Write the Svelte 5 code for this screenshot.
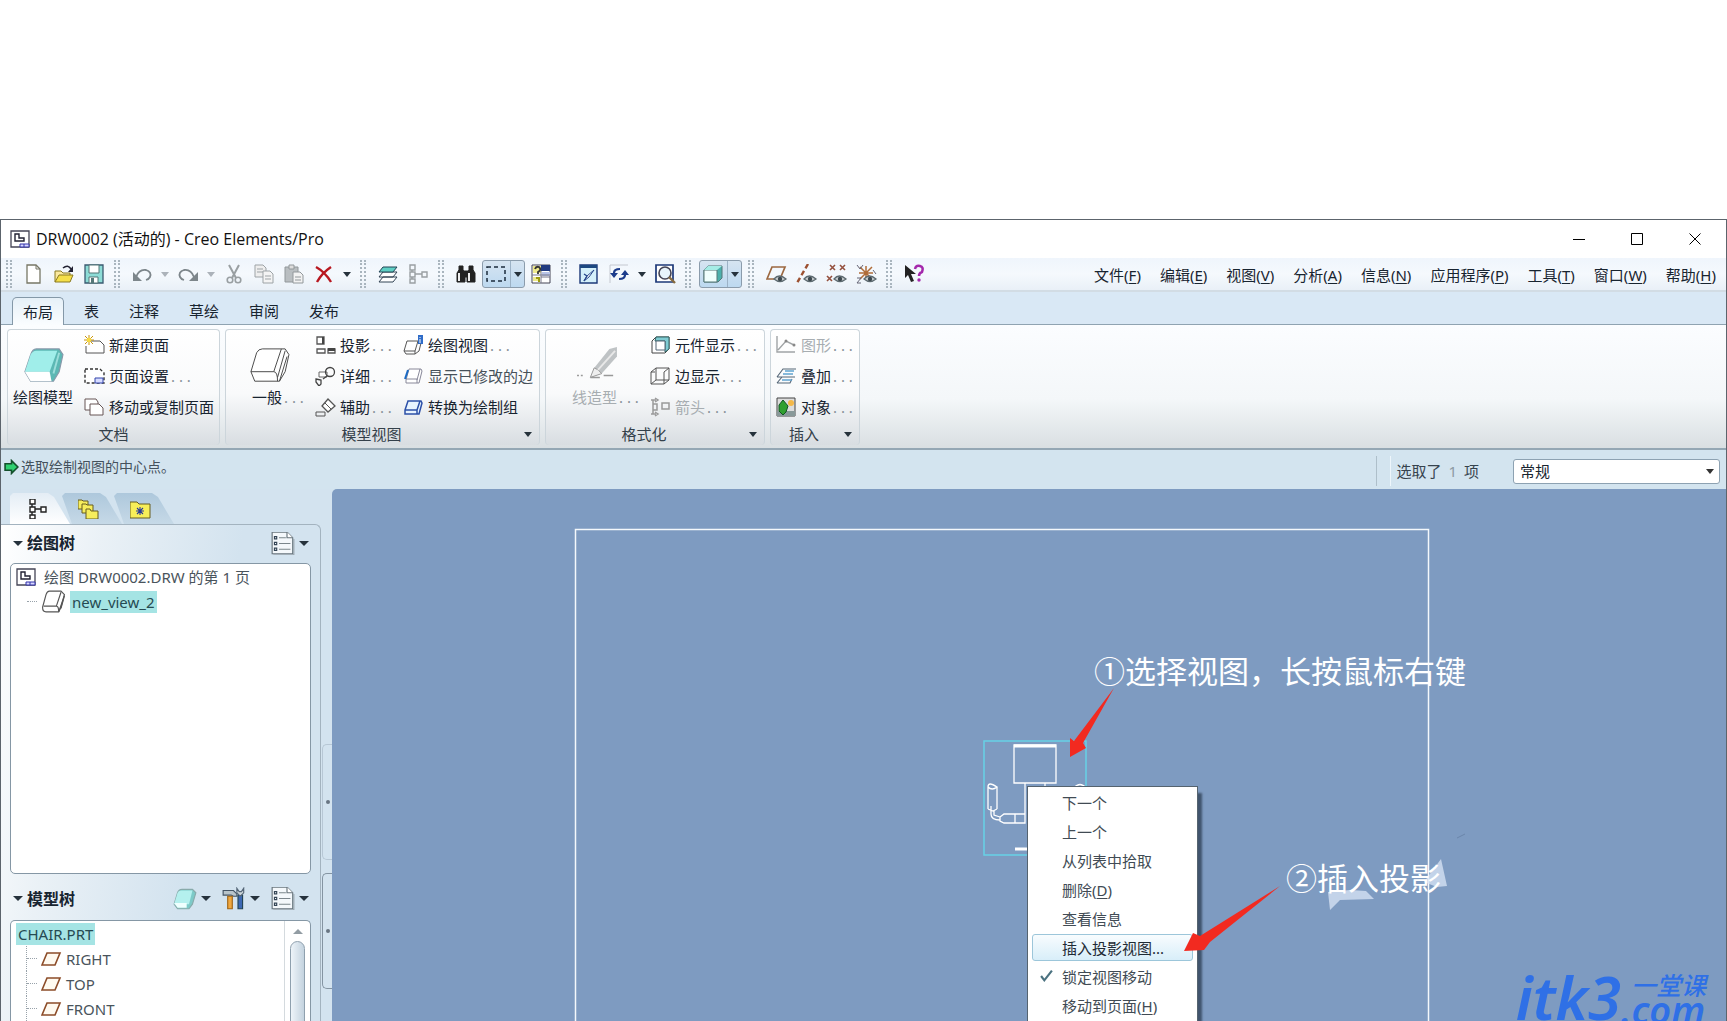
<script>
  let filter = "常规";

  // shapes that several icons share
  const sheetBox = `<path d="M1 15 4 4q1-3 3-3h10l3 3-3 11-2 4H4q-3 0-3-4Z" fill="#fff" stroke="#555"/><path d="M2 14h11q2 0 2 5M13 14 17 2M15 19 20 5M17 16l3-11" fill="none" stroke="#555"/>`;
  const eye = `<path d="M8 15q5-6 12 0-6 5-12 0Z" fill="#c9ced0" stroke="#5d6a70" stroke-width="1.3"/><circle cx="14" cy="15" r="2.2" fill="#3c484e"/>`;
  const cross = (x, y) => `<path d="m${x} ${y} 5 5m0-5-5 5" stroke="#94503e" stroke-width="1.6"/>`;

  const icons = {
    app: `<path d="M1 2h18v16H1Z" fill="#fff" stroke="#445" stroke-width="1.3"/><path d="M5 5v7h9v-3H9V5Z" fill="#fff" stroke="#223" stroke-width="1.4"/><path d="M10 15h9v3h-9Z" fill="#d8d8ff" stroke="#33a"/><path d="M14 15v3" stroke="#33a"/>`,
    newFile: `<path d="M3 1h9l4 4v14H3Z" fill="#fff" stroke="#776" stroke-width="1.3"/><path d="M12 1v4h4" fill="none" stroke="#776"/>`,
    open: `<path d="M1 18V7h6l2 2h7v3" fill="#fbe9a0" stroke="#8a7a20"/><path d="M1 18 5 11h14l-3 7Z" fill="#f5df4a" stroke="#8a7a20"/><path d="M9 4q5-4 8 1" fill="none" stroke="#223" stroke-width="1.6"/><path d="M19 2v6h-5Z" fill="#223"/>`,
    save: `<path d="M1 1h18v18H1Z" fill="#8ddcd6" stroke="#3a5a70" stroke-width="1.3"/><path d="M5 1h10v8H5ZM5 13h9v6H5Z" fill="#fff" stroke="#577"/><path d="M7 14h3v5H7Z" fill="#577"/>`,
    undo: `<path d="M4 13q3-8 10-7 6 2 4 7-1 2-4 3" fill="none" stroke="#7d868b" stroke-width="1.8"/><path d="M1 8v9h9Z" fill="#7d868b"/>`,
    redo: `<path d="M16 13Q13 5 6 6 0 8 2 13q1 2 4 3" fill="none" stroke="#7d868b" stroke-width="1.8"/><path d="M20 8v9h-9Z" fill="#7d868b"/>`,
    cut: `<path d="m5 1 7 13M15 1 8 14" stroke="#999fa2" stroke-width="2"/><circle cx="6" cy="16" r="2.8" fill="none" stroke="#999fa2" stroke-width="1.6"/><circle cx="14" cy="16" r="2.8" fill="none" stroke="#999fa2" stroke-width="1.6"/>`,
    copy: `<path d="M1 1h8l3 3v9H1Z" fill="#eee" stroke="#9da3a6"/><path d="M9 7h7l3 3v9H9Z" fill="#f4f4f4" stroke="#9da3a6"/><path d="M3 5h6M3 8h6M11 12h6M11 15h6" stroke="#9da3a6"/>`,
    paste: `<path d="M1 3h13v15H1Z" fill="#b9bec1" stroke="#92989b"/><path d="M5 1h5v4H5Z" fill="#ddd" stroke="#92989b"/><path d="M9 8h7l3 3v8H9Z" fill="#f2f2f2" stroke="#92989b"/><path d="M11 13h6M11 16h6" stroke="#92989b"/>`,
    remove: `<path d="M2 3q9 5 15 15M17 3Q8 9 3 18" fill="none" stroke="#b81820" stroke-width="2.4"/>`,
    layers: `<path d="m1 18 4-5h14l-4 5ZM1 13l4-5h14l-4 5Z" fill="#fff" stroke="#345"/><path d="m1 8 4-5h14l-4 5Z" fill="#5fcfc4" stroke="#245"/>`,
    tree: `<path d="M2 1h5v5H2ZM2 8h5v5H2ZM2 15h5v4H2ZM14 8h5v5h-5ZM7 10h7M4 6v2M4 13v2" fill="none" stroke="#999fa2" stroke-width="1.4"/>`,
    treeDark: `<g fill="#fff" stroke="#222" stroke-width="1.4"><path d="M4 0h5v5H4ZM4 8h5v5H4ZM4 16h5v4H4ZM15 8h5v5h-5Z"/><path d="M9 10h6M6 5v3M6 13v3"/></g>`,
    find: `<path d="M3 7V2h4v5M13 7V2h4v5M1 9l2-3h4l2 3v9H1ZM11 9l2-3h4l2 3v9h-8ZM8 7h4v6H8Z" fill="#222" stroke="#222"/><path d="M3 9v8M13 9v8" stroke="#eee" stroke-width="2"/>`,
    select: `<path d="M1 3h18v14H1Z" fill="none" stroke="#1c2c3c" stroke-width="1.5" stroke-dasharray="4 3"/>`,
    query: `<path d="M1 1h18v18H1Z" fill="#fff" stroke="#445"/><path d="M10 1h9v6h-9Z" fill="#203a80"/><path d="M11 8h8v4h-8Z" fill="#b8c4e8"/><path d="M2 2h8v7H2ZM2 13h7v4H2Z" fill="#eeea8c"/><path d="M4 5q1-3 4-2 3 3-1 5v2" fill="none" stroke="#333" stroke-width="1.8"/><path d="M5 14h3v4" fill="none" stroke="#9b9a10" stroke-width="2"/><path d="M10 13h9M10 7v12M1 11h18" stroke="#778"/>`,
    repaint: `<path d="M1 1h17v18H1Z" fill="#d4f0fa" stroke="#1c3878" stroke-width="1.4"/><path d="M1 1h17v3H1Z" fill="#1c4880"/><path d="m5 17 3-5 7-6-5 7Z" fill="#fff" stroke="#27488c"/><path d="m5 10 3 2M5 17l3-5" stroke="#27488c" stroke-width="1.4"/>`,
    refresh: `<path d="M1 19V1h18" fill="none" stroke="#c4c8d0"/><path d="M5 9q0-4 6-4M16 11q0 4-6 4" fill="none" stroke="#1c3c8c" stroke-width="2.200"/><path d="M1 9h8l-4 5ZM12 11h8l-4-5Z" fill="#1c3c8c"/>`,
    zoom: `<path d="M1 1h17v17H1Z" fill="#fff" stroke="#1c3878" stroke-width="1.7"/><circle cx="10" cy="9" r="6" fill="#e8f4fc" stroke="#445" stroke-width="1.6"/><path d="m14 13 6 6" stroke="#876b40" stroke-width="2.4"/>`,
    shade: `<path d="m1 6 4-4h14v12l-4 4H1Z" fill="#4cb0ac" stroke="#577"/><path d="M1 6h13v12H1Z" fill="#f0fffd" stroke="#577"/><path d="m1 6 4-4h14l-5 4Z" fill="#a5ece6"/>`,
    planes: `<path d="M1 15 6 3h13l-5 12Z" fill="none" stroke="#9c6840" stroke-width="1.7"/>${eye}`,
    axes: `<path d="M12 0 1 19" stroke="#9c5030" stroke-width="2.4" stroke-dasharray="5 3"/>${eye}`,
    points: `${cross(4, 1)}${cross(14, 1)}${cross(1, 12)}${eye}`,
    csys: `<path d="M10 2v14M3 9h14M4 3l12 12M16 3 4 15" stroke="#b06c38" stroke-width="1.5"/><path d="m1 1 3 4 3-4M17 6l3 4M1 14h4l-4 5h4" fill="none" stroke="#667"/>${eye}`,
    help: `<path d="M1 1v13l3-3 3 7 3-1-3-7h5Z" fill="#222"/><path d="M11 5q1-4 5-3t2 6q-3 1-3 4" fill="none" stroke="#a428ac" stroke-width="2.5"/><circle cx="15" cy="16" r="1.7" fill="#a428ac"/>`,
    newSheet: `<path d="M6 6h10l4 4v8H2v-7" fill="#fff" stroke="#555"/><path d="M5 0v10M0 5h10M1 1l8 8M9 1 1 9" stroke="#c8940c"/><circle cx="5" cy="5" r="2.3" fill="#f8dc40"/>`,
    sheetSetup: `<path d="M1 3h15l4 4v10H1Z" fill="#fff" stroke="#333" stroke-width="1.4" stroke-dasharray="3 2"/><path d="M11 12h8v5h-8Z" fill="#d7dcff" stroke="#34a"/>`,
    sheets: `<path d="M1 2h11l2 3v8H1Z" fill="#fff" stroke="#655"/><path d="M6 7h9l4 4v7H6Z" fill="#fff" stroke="#655"/>`,
    projection: `<path d="M2 2h7v7H2ZM2 14h8v4H2ZM13 14h7v4h-7Z" fill="#fff" stroke="#555" stroke-width="1.3"/><path d="M13 13h7v3h-7ZM7 2h2v7H7Z" fill="#444"/>`,
    detail: `<path d="M4 6h8v5H4Z" fill="#fff" stroke="#666"/><circle cx="15" cy="6" r="4.5" fill="none" stroke="#444" stroke-width="1.3"/><path d="m1 13 5 1v4l-2 2-3-4ZM8 13l4-3" fill="none" stroke="#444" stroke-width="1.3"/>`,
    auxiliary: `<path d="M13 2 20 9l-7 6-6-6Z" fill="#fff" stroke="#555" stroke-width="1.3"/><path d="M1 15h9v4H1ZM10 6l6 6" fill="none" stroke="#555"/>`,
    viewInfo: `<g fill="none" stroke="#555"><path d="m1 16 3-10h11l-3 10ZM12 16v3l4-3 2-8M1 16l2 3h9"/></g><path d="M15 0h5v9h-5Z" fill="#2f6cc8"/><path d="M17 2v1m0 1v4" stroke="#fff"/>`,
    edges: `<path d="m3 14 3-11h12l1 2-3 12H3ZM14 14l3-11M3 13h11v4" fill="#fff" stroke="#889"/><path d="m2 13 3-9" stroke="#1a6ac4" stroke-width="2"/>`,
    convert: `<path d="m2 13 3-9h13l1 2-3 11H2ZM14 13l3-9M2 13h12v4" fill="#e8f4ff" stroke="#2c50a8" stroke-width="1.5"/>`,
    component: `<path d="m2 6 4-4h13v12l-4 4H2Z" fill="#fff" stroke="#444"/><path d="M6 2h13v12l-4 3V6H5Z" fill="#7fcbd2" stroke="#366"/><path d="M6 6h9v9H6Z" fill="#fff" stroke="#567"/>`,
    edgeShow: `<path d="m1 6 5-4h13v12l-5 4H1ZM6 2v12h13M6 14l-5 4M19 2l-5 4v12M1 6h4" fill="none" stroke="#555"/>`,
    arrow: `<path d="M1 3h5M5 1l3 2-3 2M1 17h5M5 15l3 2-3 2M3 3v14M3 7h4v6H3M12 6h7v6h-7Z" fill="none" stroke="#999" stroke-width="1.5"/>`,
    graph: `<path d="M1 1v16h18M2 15l8-9 8 4" fill="none" stroke="#a0a4a6" stroke-width="1.4"/><circle cx="10" cy="6" r="1.5" fill="#888"/><circle cx="18" cy="10" r="1.5" fill="#888"/>`,
    overlay: `<path d="m1 17 5-6h13M1 17h13l2-4M1 11l6-8h13M1 11h13" fill="none" stroke="#567" stroke-width="1.1"/><path d="M9 5h9M7 8h10M6 14h10" stroke="#60a4d0" stroke-width="1.5"/>`,
    object: `<path d="M1 1h18v18H1Z" fill="#ddd" stroke="#444"/><path d="M1 14h18v5H1Z" fill="#899"/><path d="m7 3 5 6-2 6-3 3-4-4V8Z" fill="#30a030" stroke="#152"/><circle cx="15" cy="6" r="3" fill="#f4b848"/>`,
    layerTab: `<g fill="#f6ed5c" stroke="#665c20"><path d="M0 1h4l1 1h5v8H0Z"/><path d="M4 5h4l1 1h6v8H4Z"/><path d="M8 10h4l1 2h7v8H8Z"/></g>`,
    starTab: `<path d="M0 3h7l2 2h11v14H0Z" fill="#f7ee58" stroke="#665c20"/><path d="M10 8v8M6 12h8M7 9l6 6M13 9l-6 6" stroke="#2a3a98" stroke-width="1.1"/>`,
    list: `<path d="M1 0h13l5 5v14H1Z" fill="#f4f8fb" stroke="#67747c"/><path d="M14 0v5h5" fill="#fff" stroke="#67747c"/><path d="M2 20h18V6" fill="none" stroke="#9aa6ae"/><path d="M7 5h6M7 10h10M7 15h10" stroke="#7b868c"/><path d="M3 4h2v2H3ZM3 9h2v2H3ZM3 14h2v2H3Z" fill="none" stroke="#345"/>`,
    model: `<path d="M1 15 4 5q1-3 4-3h9l3 3-3 10-3 4H4Z" fill="#7ccac8" stroke="#8aa"/><path d="M1 15 4 5q1-2 3-2h10l-3 12Z" fill="#b4f0ee"/><path d="M1 14h11v4H4Z" fill="#effffe"/>`,
    tools: `<path d="M1 3h9l3 3v2h-3L8 7H1Z" fill="#b8c4ca" stroke="#456"/><path d="M5 8h4v11H5Z" fill="#f0a840" stroke="#a06414"/><path d="M14 7h4v12h-4Z" fill="#3c68b4" stroke="#245"/><path d="m13 1 2 3h2l2-3v4l-3 3-3-3Z" fill="#ccd6da" stroke="#567"/>`,
    view: sheetBox,
    plane: `<path d="M1 16 6 4h13l-5 12Z" fill="#fffaf0" stroke="#8c4c28" stroke-width="1.6"/>`,
    modelBig: `<path d="M1 13 4 4q1-3 3-3h12l2 3-2 9-3 5H4Z" fill="#5cb8b4" stroke="#89a" stroke-width=".6"/><path d="M1 13 4 4q1-2 3-2h11l-4 11Z" fill="#a0eeea"/><path d="M1 13h13l1 5H4Z" fill="#fff"/><path d="m16 14 3-11" stroke="#9cdedb"/>`,
    viewBig: `<g fill="#fff" stroke="#444" stroke-width=".5"><path d="M1 13 4 3q1-2 3-2h12l2 3-2 9-3 5H3Z"/><path d="M1 13h12q2 0 2 5M13 13 17 1M15 16l4-14M16 18l4-13" fill="none"/></g>`,
    pencil: `<path d="m9 11 8-10 4-1v5l-8 9-6 2Z" fill="#bfc3c5"/><path d="m9 11 2 1 2 2-6 2Z" fill="#eee" stroke="#999" stroke-width=".5"/><path d="m11 12 9-10" stroke="#e8e8e8"/><path d="M0 15h1m1 0h1m4 1h5m2-1h5" stroke="#999" stroke-width=".8"/>`,
  };

  const toolbar = [
    ["grip"], ["newFile", "新建"], ["open", "打开"], ["save", "保存"],
    ["grip"], ["undo", "撤消"], ["drop", "撤消列表", true], ["redo", "重做"], ["drop", "重做列表", true],
    ["cut", "剪切"], ["copy", "复制"], ["paste", "粘贴"], ["remove", "删除"], ["drop", "删除选项"],
    ["grip"], ["layers", "层"], ["tree", "模型树"],
    ["grip"], ["find", "查找"], ["toggle", "选取", "select"], ["query", "查询"],
    ["grip"], ["repaint", "重画"], ["refresh", "更新"], ["drop", "更新选项"], ["zoom", "缩放"],
    ["grip"], ["toggle", "着色", "shade"],
    ["grip"], ["planes", "基准平面"], ["axes", "基准轴"], ["points", "基准点"], ["csys", "坐标系"],
    ["grip"], ["help", "帮助"],
  ];

  const menus = [
    ["文件", "F"], ["编辑", "E"], ["视图", "V"], ["分析", "A"], ["信息", "N"],
    ["应用程序", "P"], ["工具", "T"], ["窗口", "W"], ["帮助", "H"],
  ];

  const tabs = ["布局", "表", "注释", "草绘", "审阅", "发布"];

  // items: [icon, text, has dots, state]
  const groups = [
    {
      name: "文档", cls: "doc",
      big: ["modelBig", "绘图模型", false],
      cols: [[["newSheet", "新建页面"], ["sheetSetup", "页面设置", true], ["sheets", "移动或复制页面"]]],
    },
    {
      name: "模型视图", cls: "views", more: true,
      big: ["viewBig", "一般", true],
      cols: [
        [["projection", "投影", true], ["detail", "详细", true], ["auxiliary", "辅助", true]],
        [["viewInfo", "绘图视图", true], ["edges", "显示已修改的边", false, "soft"], ["convert", "转换为绘制组"]],
      ],
    },
    {
      name: "格式化", cls: "format", more: true,
      big: ["pencil", "线造型", true, "off"],
      cols: [[["component", "元件显示", true], ["edgeShow", "边显示", true], ["arrow", "箭头", true, "off"]]],
    },
    {
      name: "插入", cls: "insert", more: true,
      cols: [[["graph", "图形", true, "off"], ["overlay", "叠加", true], ["object", "对象", true]]],
    },
  ];

  const planes = ["RIGHT", "TOP", "FRONT"];

  const contextMenu = [
    { text: "下一个" },
    { text: "上一个" },
    { text: "从列表中拾取" },
    { text: "删除", key: "D" },
    { text: "查看信息" },
    { text: "插入投影视图...", active: true },
    { text: "锁定视图移动", checked: true },
    { text: "移动到页面", key: "H" },
  ];
</script>

{#snippet icon(name)}
  <svg class="icon" viewBox="0 0 21 20" aria-hidden="true" fill="none">{@html icons[name]}</svg>
{/snippet}

<div class="page">
  <div class="window">
    <header class="title">
      {@render icon("app")}
      <h1>DRW0002 (活动的) - Creo Elements/Pro</h1>
      <div class="controls">
        <button aria-label="最小化"><svg viewBox="0 0 12 12"><path d="M0 6.5h12" /></svg></button>
        <button aria-label="最大化"><svg viewBox="0 0 12 12"><path d="M.5.5h11v11H.5Z" /></svg></button>
        <button aria-label="关闭"><svg viewBox="0 0 12 12"><path d="m.5.5 11 11m0-11-11 11" /></svg></button>
      </div>
    </header>

    <div class="toolbar">
      {#each toolbar as [kind, label, extra]}
        {#if kind === "grip"}
          <span class="grip"></span>
        {:else if kind === "drop"}
          <button class="drop" class:faint={extra} aria-label={label}><i></i></button>
        {:else if kind === "toggle"}
          <button class="toggle" aria-label={label}>
            {@render icon(extra)}
            <span><i></i></span>
          </button>
        {:else}
          <button class="tool" aria-label={label}>{@render icon(kind)}</button>
        {/if}
      {/each}
      <nav>
        {#each menus as [text, key]}
          <button>{text}(<u>{key}</u>)</button>
        {/each}
      </nav>
    </div>

    <div class="tabs">
      {#each tabs as tab, i}
        <button class:current={i === 0}>{tab}</button>
      {/each}
    </div>

    <div class="ribbon">
      {#each groups as group}
        <section class={group.cls}>
          <div class="tools">
            {#if group.big}
              <button class="big {group.big[3] || ''}">
                {@render icon(group.big[0])}
                <span>{group.big[1]}{#if group.big[2]}<em>. . .</em>{/if}</span>
              </button>
            {/if}
            {#each group.cols as col}
              <div class="col">
                {#each col as [name, text, dots, state]}
                  <button class={state || ""}>
                    {@render icon(name)}
                    <span>{text}{#if dots}<em>. . .</em>{/if}</span>
                  </button>
                {/each}
              </div>
            {/each}
          </div>
          <footer>
            <span>{group.name}</span>
            {#if group.more}<button class="drop" aria-label={group.name + "选项"}><i></i></button>{/if}
          </footer>
        </section>
      {/each}
    </div>

    <div class="status">
      <svg class="go" viewBox="0 0 14 14"><path d="M1 4h6V1l6 6-6 6v-3H1Z" fill="#2fd070" stroke="#14502c" stroke-width="1.5" /></svg>
      <p>选取绘制视图的中心点。</p>
      <div class="picked">选取了 <b>1</b> 项</div>
      <select bind:value={filter} aria-label="选取过滤器">
        <option>常规</option>
      </select>
    </div>

    <main>
      <aside>
        <div class="side-tabs">
          <button class="front" aria-label="模型树">{@render icon("treeDark")}</button>
          <button aria-label="层树">{@render icon("layerTab")}</button>
          <button aria-label="收藏夹">{@render icon("starTab")}</button>
        </div>
        <div class="side">
          <div class="panel">
            <div class="head">
              <i></i>
              <h2>绘图树</h2>
              <button aria-label="设置">{@render icon("list")}<i></i></button>
            </div>
            <div class="box drawing">
              <div class="row">{@render icon("app")}<span>绘图 DRW0002.DRW 的第 1 页</span></div>
              <div class="row child last">{@render icon("view")}<mark>new_view_2</mark></div>
            </div>
            <div class="head second">
              <i></i>
              <h2>模型树</h2>
              <button aria-label="显示">{@render icon("model")}<i></i></button>
              <button aria-label="工具">{@render icon("tools")}<i></i></button>
              <button aria-label="设置">{@render icon("list")}<i></i></button>
            </div>
            <div class="box model">
              <div class="rows">
                <div class="row"><mark>CHAIR.PRT</mark></div>
                {#each planes as plane}
                  <div class="row child">{@render icon("plane")}<span>{plane}</span></div>
                {/each}
              </div>
              <div class="scroll"><i></i><div class="thumb"></div></div>
            </div>
          </div>
          <div class="splits">
            <button class="split pale" aria-label="折叠绘图树"></button>
            <button class="split" aria-label="折叠模型树"></button>
          </div>
        </div>
      </aside>

      <div class="canvas">
        <svg class="layer" width="1394" height="900" viewBox="0 0 1394 900" fill="none">
          <path d="M243.5 900V40.500H1096.500V900" stroke="#f4f8fc" stroke-width="1.500" />
          <path d="M652 252h102v114H652Z" stroke="#67d2e6" stroke-width="1.500" />
          <g stroke="#fff" stroke-width="1.300">
            <path d="M682 256h42v38h-42Z" />
            <path d="M682 257h42" stroke-width="3" />
            <path d="M693 294v40M713 294v8M656 298v22M665 298v22M656 298q0-6 9 0-5 4-9 0M656 320l5 2 4-2M659 317v8q0 6 9 6M662 322v4l6 2M668 328l4-3h21v9h-21l-4-2ZM683 325v9M742 299q6-7 12 0" />
            <path d="M683 360h20" stroke-width="3" />
          </g>
          <path d="m996 403 2 18 10-10 34-1-8-8-16-1Zm96-10 17-23 6 27-10 1Z" fill="#dbe5f5" fill-opacity=".75" />
          <path d="m1125 349 8-4" stroke="#6b86ab" />
        </svg>
        <p class="note first">①选择视图，长按鼠标右键</p>
        <p class="note next">②插入投影</p>
        <div class="logo">
          <strong>itk3</strong>
          <div><span>一堂课</span><b>.com</b></div>
        </div>
        <menu>
          {#each contextMenu as item}
            <li>
              <button class:active={item.active}>
                {#if item.checked}
                  <svg class="check" viewBox="0 0 12 12"><path d="m1 6 3 4 7-9" /></svg>
                {/if}
                <span>{item.text}{#if item.key}(<u>{item.key}</u>){/if}</span>
              </button>
            </li>
          {/each}
        </menu>
        <!-- callout arrows lie over the menu -->
        <svg class="layer" width="1394" height="900" viewBox="0 0 1394 900" fill="#f22a20">
          <path d="m782 199-40 53-4-3v19l16-9-3-5Z" />
          <path d="m948 397-80 50-7-3-9 18 20-1 6-8Z" />
        </svg>
      </div>
    </main>
  </div>
</div>

<style>
  :global(body) {
    margin: 0;
    background: #fff;
  }
  * {
    box-sizing: border-box;
  }
  .page {
    display: flex;
    flex-direction: column;
    height: 100vh;
    padding-top: 219px;
    overflow: hidden;
    font: 15px/20px "Noto Sans", "Noto Sans CJK SC", sans-serif;
    color: #182430;
  }
  button {
    border: 0;
    padding: 0;
    background: none;
    font: inherit;
    color: inherit;
    white-space: nowrap;
  }
  p, h1, h2, menu {
    margin: 0;
    padding: 0;
  }
  i {
    display: block;
    flex: none;
    border: 4px solid transparent;
    border-top: 5px solid #26323c;
    border-bottom: 0;
  }
  .icon {
    display: block;
    flex: none;
    width: 21px;
    height: 20px;
  }
  .window {
    display: flex;
    flex-direction: column;
    flex: 1;
    min-height: 0;
    border: 1px solid #5c646c;
    border-bottom: 0;
    background: #d3e3ef;
  }

  .title {
    display: flex;
    align-items: center;
    height: 38px;
    padding: 0 2px 0 9px;
    gap: 5px;
    background: #fff;
  }
  h1 {
    flex: 1;
    font: 400 16px/20px "Open Sans", "Noto Sans CJK SC", sans-serif;
    color: #111;
  }
  .controls {
    display: flex;
  }
  .controls button {
    width: 58px;
    height: 38px;
  }
  .controls svg {
    width: 12px;
    height: 12px;
    fill: none;
    stroke: #000;
  }

  .toolbar {
    display: flex;
    align-items: center;
    height: 34px;
    background: linear-gradient(#eff5fc, #f5f9fd 50%, #e9f0f7);
    border-bottom: 2px solid #d2dce4;
  }
  .grip {
    width: 6px;
    height: 28px;
    margin: 0 7px 0 5px;
    border: dotted #a9b5be;
    border-width: 0 2px;
  }
  .tool {
    display: flex;
    justify-content: center;
    width: 30px;
  }
  .drop {
    display: flex;
    justify-content: center;
    width: 16px;
  }
  .faint {
    opacity: .35;
  }
  .toggle {
    display: flex;
    align-items: center;
    width: 43px;
    height: 28px;
    margin: 0 1px;
    padding-left: 3px;
    border: 1px solid #8b9cac;
    border-radius: 3px;
    background: linear-gradient(#d6e4f1, #bdd9f0);
  }
  .toggle span {
    display: flex;
    align-items: center;
    height: 26px;
    margin-left: 3px;
    padding-left: 3px;
    border-left: 1px solid #9cb2c6;
  }
  nav {
    display: flex;
    gap: 19px;
    margin: 2px 10px 0 auto;
  }
  u {
    text-underline-offset: 2px;
  }

  .tabs {
    display: flex;
    align-items: flex-end;
    gap: 10px;
    height: 33px;
    padding-left: 11px;
    border-bottom: 1px solid #8fa3b1;
    background: #d9e8f5;
  }
  .tabs button {
    height: 27px;
    padding: 0 10px;
  }
  .tabs .current {
    height: 28px;
    margin-bottom: -1px;
    border: 1px solid #8498a8;
    border-bottom: 0;
    border-radius: 5px 5px 0 0;
    background: linear-gradient(#e6f0f8, #fafdff);
  }

  .ribbon {
    display: flex;
    gap: 5px;
    height: 125px;
    padding: 4px 6px 3px;
    background: linear-gradient(#fbfdff, #f4f7f9 60%, #d9dfe2);
    border-bottom: 2px solid #94a7b4;
  }
  section {
    display: flex;
    flex-direction: column;
    border: 1px solid #ccd5db;
    border-bottom: 0;
    border-radius: 4px;
    background: linear-gradient(#fff, #f9fafb 55%, #d8dde1);
  }
  .doc { width: 213px; }
  .views { width: 315px; }
  .format { width: 220px; }
  .insert { width: 90px; }
  .tools {
    display: flex;
    align-items: flex-start;
    flex: 1;
  }
  .big {
    width: 71px;
    padding: 17px 0 0 5px;
    text-align: left;
  }
  .big .icon {
    width: 42px;
    height: 38px;
    margin-left: 9px;
  }
  .big span {
    display: block;
    line-height: 24px;
  }
  .views .big {
    width: 84px;
    padding-left: 26px;
  }
  .views .big .icon {
    margin-left: -4px;
  }
  .format .big {
    width: 99px;
    padding-left: 26px;
  }
  .format .big .icon {
    margin-left: 4px;
  }
  .views .col:nth-child(2) {
    width: 88px;
  }
  .col {
    display: flex;
    flex-direction: column;
    padding-left: 5px;
    margin-top: -1px;
  }
  .col button {
    display: flex;
    align-items: center;
    gap: 4px;
    height: 31px;
  }
  em {
    padding-left: 2px;
    color: #879198;
    font-style: normal;
  }
  .off {
    color: #a7adb1;
  }
  .soft {
    color: #47515a;
  }
  section footer {
    display: flex;
    align-items: center;
    height: 22px;
    color: #34404a;
  }
  section footer span {
    flex: 1;
    text-align: center;
  }
  section footer .drop {
    width: 22px;
  }

  .status {
    display: flex;
    align-items: center;
    height: 39px;
    padding: 3px 6px 0 3px;
    background: #d3e4ef;
  }
  .go {
    width: 15px;
    height: 16px;
    margin-bottom: 8px;
  }
  .status p {
    flex: 1;
    margin: 0 0 8px 2px;
    font-size: 14px;
    color: #44515c;
  }
  .picked {
    margin-right: 34px;
    padding-left: 6px;
    border-left: 1px solid #eef6fb;
    color: #36434e;
    line-height: 30px;
  }
  .picked::before {
    content: "";
    float: left;
    width: 14px;
    height: 30px;
    margin-left: -21px;
    border-left: 1px solid #aebfca;
  }
  .picked b {
    padding: 0 3px;
    font-weight: 400;
    color: #8d9aa4;
  }
  select {
    width: 207px;
    height: 25px;
    padding: 0 6px;
    border: 1px solid #8da2b2;
    border-radius: 3px;
    appearance: none;
    background: #fff url("data:image/svg+xml,%3Csvg xmlns='http://www.w3.org/2000/svg' viewBox='0 0 8 5'%3E%3Cpath d='M0 0h8L4 5Z' fill='%23333'/%3E%3C/svg%3E") no-repeat right 5px center / 8px 5px;
    font: inherit;
    color: inherit;
  }

  main {
    display: flex;
    flex: 1;
    min-height: 0;
  }
  aside {
    display: flex;
    flex-direction: column;
    width: 331px;
    flex: none;
  }
  .side-tabs {
    display: flex;
    height: 35px;
    padding: 4px 0 0 9px;
  }
  .side-tabs button {
    width: 62px;
    padding: 0 0 0 16px;
    margin-right: -10px;
    clip-path: polygon(0 100%, 0 3px, 3px 0, 38px 0, 44px 4px, 60px 100%);
    background: linear-gradient(#aec8dc, #c6d9e7);
  }
  .side-tabs button:nth-child(n + 2) {
    clip-path: polygon(10px 100%, 0 3px, 3px 0, 38px 0, 44px 4px, 60px 100%);
  }
  .side-tabs .front {
    background: linear-gradient(#e4edf5, #fff);
  }
  .side {
    display: flex;
    flex: 1;
    min-height: 0;
  }
  .panel {
    display: flex;
    flex-direction: column;
    width: 320px;
    padding: 0 9px;
    border: 1px solid #a3b3bf;
    border-width: 1px 1px 0 0;
    border-radius: 0 6px 0 0;
    background: linear-gradient(100deg, #fff, #eaf1f6 25%, #d3e3ef 60%);
  }
  .head {
    display: flex;
    align-items: center;
    height: 38px;
    padding: 0 2px 2px 3px;
    flex: none;
  }
  .second {
    height: 46px;
    padding-top: 5px;
  }
  h2 {
    flex: 1;
    padding-left: 4px;
    font-size: 16px;
    line-height: 20px;
    font-weight: 700;
  }
  .head button {
    display: flex;
    align-items: center;
    justify-content: flex-end;
    gap: 4px;
    width: 49px;
  }
  .head button .icon {
    width: 24px;
    height: 23px;
  }
  .head i {
    border-width: 5px 5px 0;
  }
  .box {
    flex: none;
    border: 1px solid #8597a5;
    border-radius: 5px;
    background: #fff;
    color: #4a545c;
  }
  .drawing {
    height: 311px;
    padding: 0 5px;
  }
  .model {
    display: flex;
    flex: 1;
    min-height: 0;
    border-bottom: 0;
    border-radius: 5px 5px 0 0;
  }
  .rows {
    flex: 1;
    padding: 0 5px;
  }
  .row {
    display: flex;
    align-items: center;
    gap: 7px;
    height: 25px;
  }
  .child {
    gap: 4px;
    margin-left: 10px;
    border-left: 1px dotted #98a2aa;
  }
  .child::before {
    content: "";
    width: 10px;
    border-top: 1px dotted #98a2aa;
  }
  .last {
    border-left-color: transparent;
  }
  .last .icon {
    width: 25px;
    height: 23px;
  }
  mark {
    padding: 1px 2px;
    background: #a5e4e4;
    color: #264a52;
  }
  .scroll {
    width: 26px;
    padding: 8px 5px 0;
    border-left: 1px solid #d4dade;
  }
  .scroll i {
    width: 10px;
    margin: 0 auto 7px;
    border: 5px solid transparent;
    border-top: 0;
    border-bottom: 5px solid #929ca3;
  }
  .thumb {
    height: 200px;
    border: 1px solid #8fa0ae;
    border-radius: 8px;
    background: linear-gradient(90deg, #eef4f9, #c4d3df);
  }
  .splits {
    display: flex;
    flex-direction: column;
    gap: 13px;
    padding: 220px 0 0 1px;
  }
  .split {
    display: grid;
    place-items: center;
    width: 10px;
    height: 116px;
    border: 1px solid #8494a2;
    border-right: 0;
    border-radius: 5px 0 0 5px;
  }
  .split::after {
    content: "";
    width: 4px;
    height: 4px;
    border-radius: 2px;
    background: #687582;
  }
  .pale {
    border-color: #b7c7d5;
  }

  .canvas {
    position: relative;
    flex: 1;
    overflow: hidden;
    border-radius: 5px 0 0 0;
    background: #7e9bc1;
  }
  .layer {
    position: absolute;
    left: 0;
    top: 0;
    pointer-events: none;
  }
  .note {
    position: absolute;
    font-family: "Noto Sans CJK SC", sans-serif;
    font-size: 31px;
    line-height: 40px;
    white-space: nowrap;
    color: #fff;
  }
  .first {
    left: 762px;
    top: 161px;
  }
  .next {
    left: 954px;
    top: 368px;
  }
  .logo {
    position: absolute;
    right: 20px;
    bottom: 0;
    display: flex;
    align-items: flex-end;
    font-style: italic;
    color: #2f70e6;
  }
  .logo strong {
    font: italic 600 60px/48px "Noto Sans", sans-serif;
  }
  .logo div {
    display: flex;
    flex-direction: column;
  }
  .logo span {
    padding-left: 10px;
    font-size: 25px;
    font-weight: 500;
    line-height: 24px;
  }
  .logo b {
    font: italic 600 38px/24px "Noto Sans", sans-serif;
  }
  menu {
    position: absolute;
    left: 695px;
    top: 297px;
    width: 171px;
    height: 260px;
    padding: 2px 4px;
    border: 1px solid #55636f;
    background: #fff;
    box-shadow: 5px 6px 2px -1px #41556e;
    list-style: none;
    color: #414b54;
  }
  li {
    height: 29px;
  }
  li button {
    position: relative;
    width: 161px;
    height: 27px;
    padding-left: 29px;
    border: 1px solid transparent;
    border-radius: 3px;
    text-align: left;
  }
  .active {
    border-color: #9cc6da;
    background: linear-gradient(#f8fcfe, #d8eef9);
    color: #1e2a34;
  }
  .check {
    position: absolute;
    left: 7px;
    top: 5px;
    width: 13px;
    height: 14px;
    fill: none;
    stroke: #4b7280;
    stroke-width: 2;
  }
</style>
